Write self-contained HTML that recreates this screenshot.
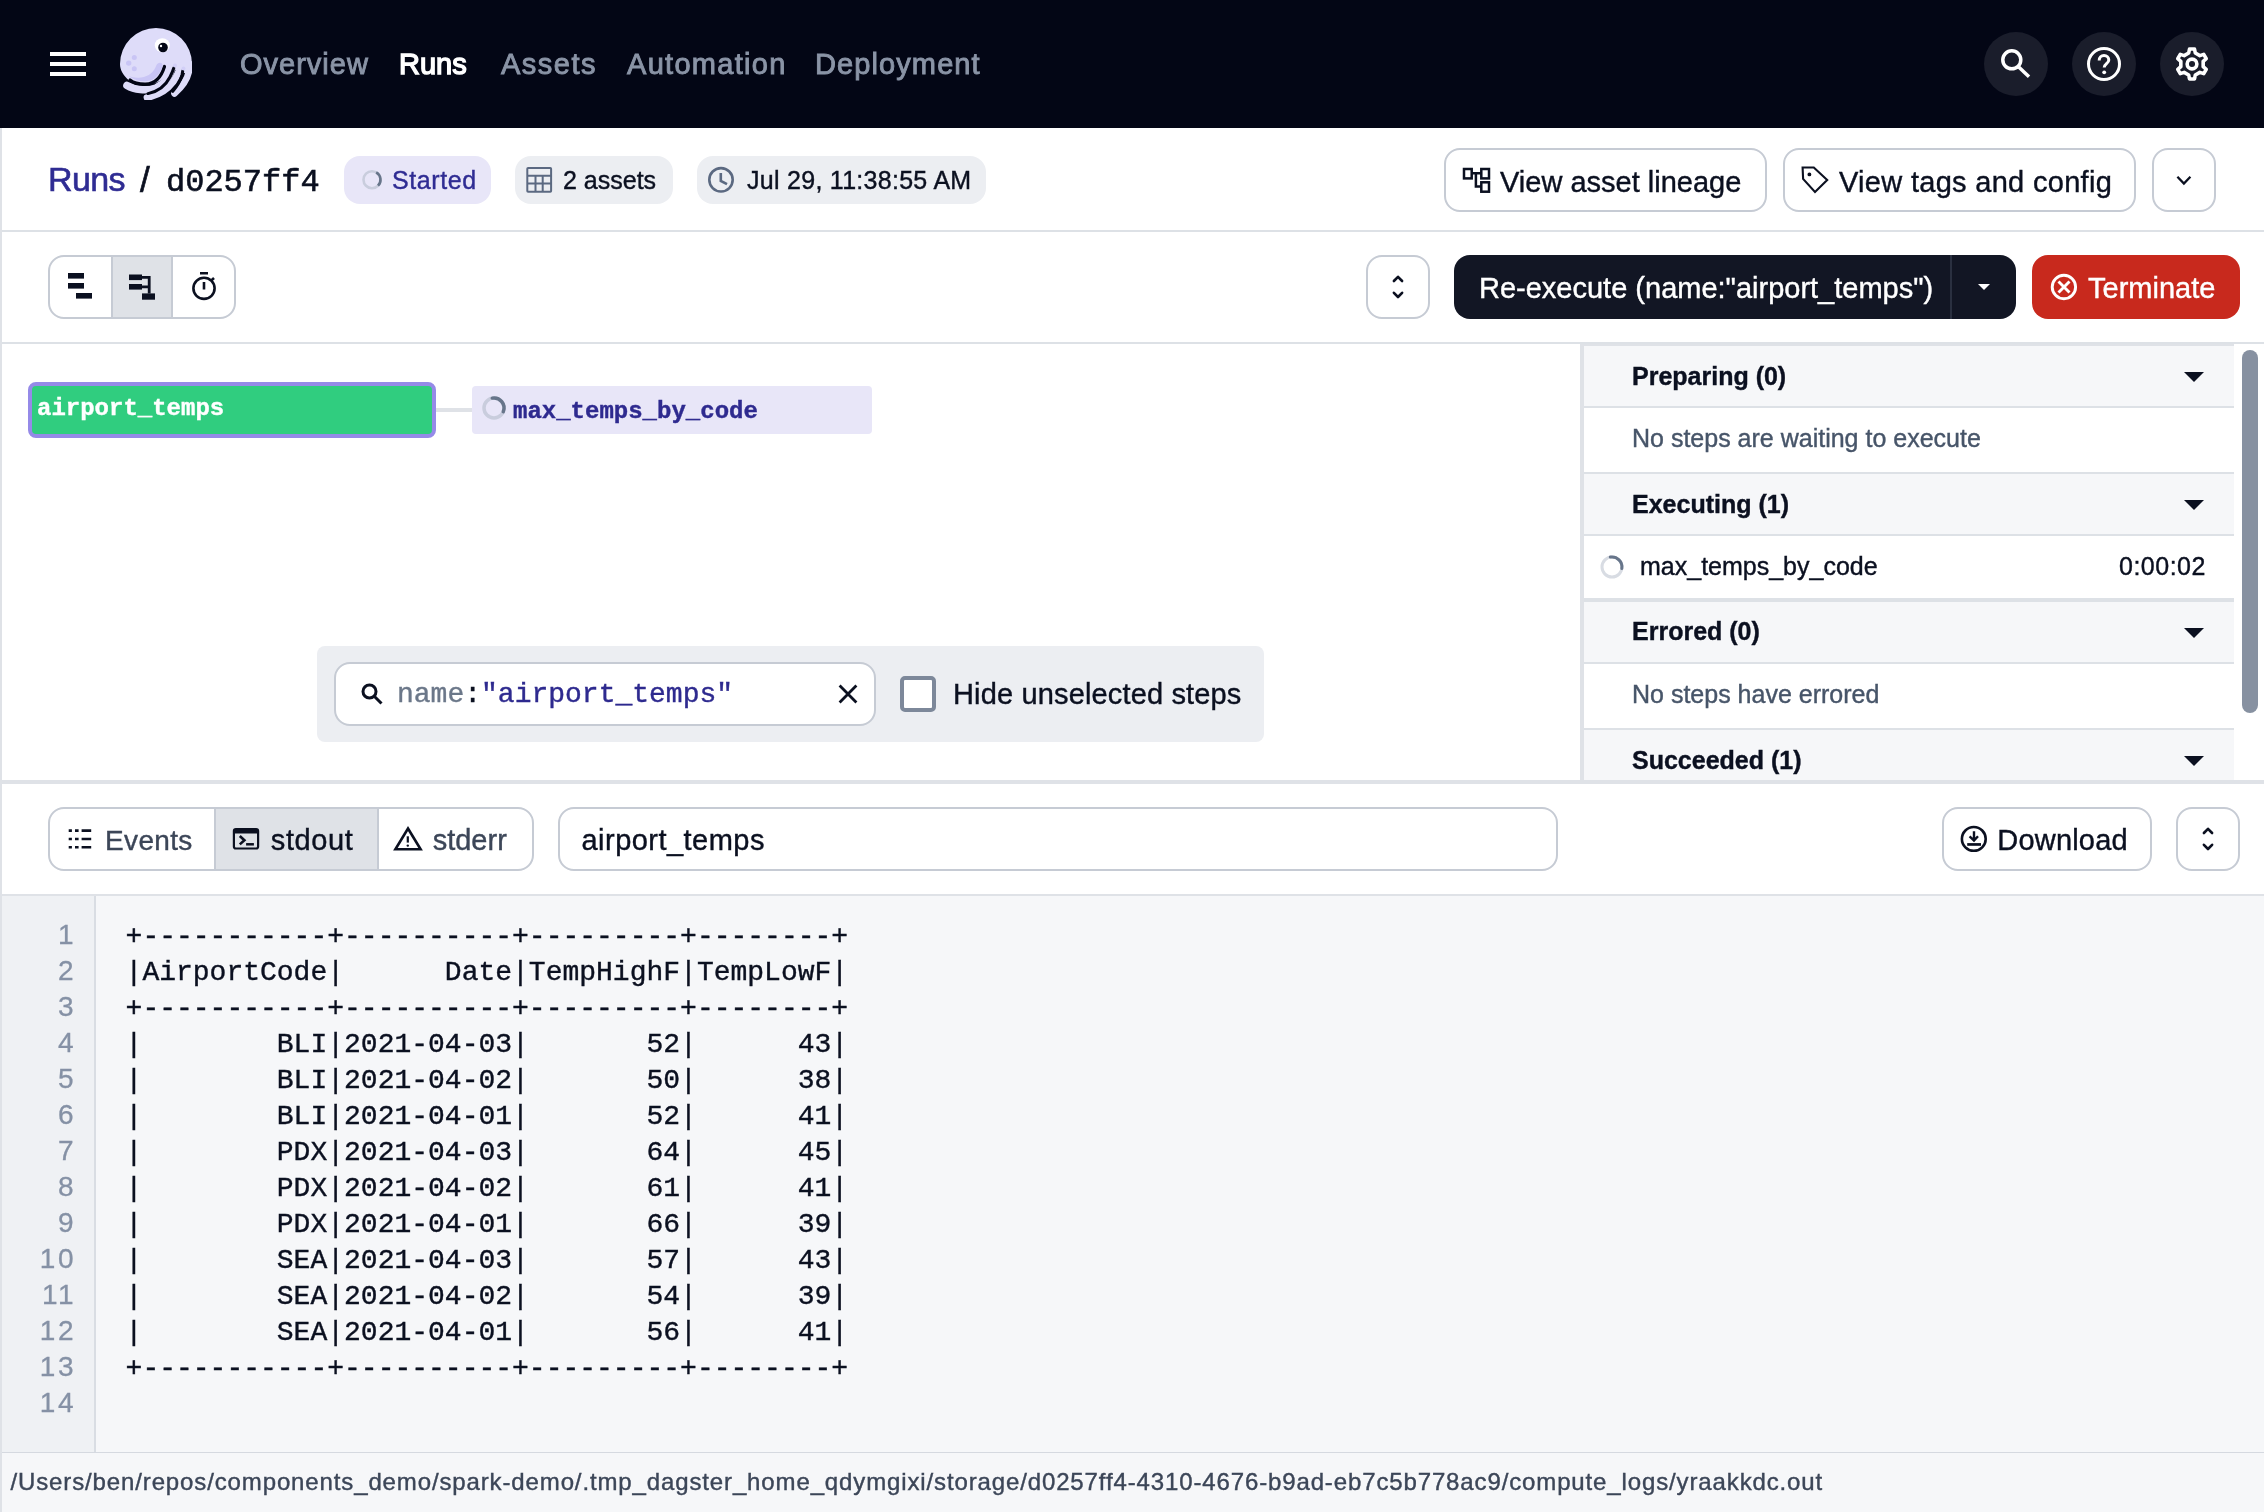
<!DOCTYPE html>
<html><head><meta charset="utf-8">
<style>
*{box-sizing:border-box;margin:0;padding:0}
html,body{will-change:transform;width:2264px;height:1512px;overflow:hidden;background:#fff;font-family:"Liberation Sans",sans-serif;color:#0b1020}
.a{position:absolute}
.t{position:absolute;white-space:pre;line-height:1;-webkit-text-stroke-width:0.4px}
.mono{font-family:"Liberation Mono",monospace}
/* header */
#nav{left:0;top:0;width:2264px;height:128px;background:#030615}
.navl{font-size:29px;color:#8a94a6;top:50px;letter-spacing:1px;-webkit-text-stroke:0.9px #8a94a6}
.circ{width:64px;height:64px;border-radius:50%;background:#1a1d2b;top:32px}
.btn{border:2px solid #c6cbd4;border-radius:16px;background:#fff}
.tag{border-radius:16px}
.hline{background:#dde1e6;height:2px}
</style></head><body>
<!-- left border -->
<div class="a" style="left:0;top:128px;width:2px;height:1384px;background:#dfe2e7"></div>

<!-- NAV -->
<div id="nav" class="a">
  <div class="a" style="left:50px;top:52px;width:36px;height:4px;background:#fff"></div>
  <div class="a" style="left:50px;top:62px;width:36px;height:4px;background:#fff"></div>
  <div class="a" style="left:50px;top:72px;width:36px;height:4px;background:#fff"></div>
  <svg class="a" style="left:120px;top:28px" width="72" height="72" viewBox="0 0 72 72">
<path d="M9 52.5 C3 47 0 42 0 36 A36 36 0 0 1 72 36 C72 40 71.5 44 70.5 47 L50 40 C47 49 40 56 26 56.5 C19 56.5 13 55 9 52.5 Z" fill="#dedcf9"/>
<path d="M7 57.5 C14 61.5 26 63.5 36 60 C45 56 50 48 52 38" stroke="#dedcf9" stroke-width="7.6" fill="none" stroke-linecap="round"/>
<path d="M27 69.5 C38 67.5 47 62 53 54 C57 48 59.5 43 60 38" stroke="#dedcf9" stroke-width="6.8" fill="none" stroke-linecap="round"/>
<path d="M54.5 65.5 C62 59 67.5 51 69 43 L69.5 36" stroke="#dedcf9" stroke-width="6.6" fill="none" stroke-linecap="round"/>
<path d="M10 52 C13.5 55 19 56.3 25.6 56.2 C34 55.8 41 50 44.5 38.5" stroke="#030615" stroke-width="3.2" fill="none" stroke-linecap="round"/>
<path d="M28 65.6 C38 63.5 46 57 50 49 C52 45 53.2 42 53.8 40" stroke="#030615" stroke-width="3" fill="none" stroke-linecap="round"/>
<path d="M52.8 63.3 C57 58.5 60.5 53 62 47 L62.7 43" stroke="#030615" stroke-width="3" fill="none" stroke-linecap="round"/>
<path d="M10 49 C15 52.5 20 53.5 26 53.3 C34 52.8 39.5 47 42.5 38.5 C43.5 35 39 33 36.5 37 C34 44 29 48.5 21 49.5 C16 50 12 49.5 9 48 Z" fill="#c9c5f5"/>
<circle cx="14.3" cy="29.5" r="2.5" fill="#c9c5f5"/>
<circle cx="8.7" cy="35.1" r="2.7" fill="#c9c5f5"/>
<circle cx="14.3" cy="40.8" r="2.5" fill="#c9c5f5"/>
<circle cx="55" cy="37.5" r="2" fill="#d2cff7"/>
<circle cx="63.5" cy="40.5" r="2" fill="#d2cff7"/>
<ellipse cx="42.3" cy="17.3" rx="7.5" ry="7" fill="#fff"/>
<circle cx="43" cy="19.5" r="4.8" fill="#030615"/>
<circle cx="41" cy="18" r="1.2" fill="#fff"/>
</svg>
  <div class="t navl" style="left:240px">Overview</div>
  <div class="t navl" style="left:399px;color:#fff;letter-spacing:0px;-webkit-text-stroke:1.4px #fff">Runs</div>
  <div class="t navl" style="left:501px;letter-spacing:1.5px">Assets</div>
  <div class="t navl" style="left:627px;letter-spacing:1.3px">Automation</div>
  <div class="t navl" style="left:815px;letter-spacing:1.1px">Deployment</div>
  <div class="a circ" style="left:1984px"></div>
  <div class="a circ" style="left:2072px"></div>
  <div class="a circ" style="left:2160px"></div>
  <svg class="a" style="left:1996px;top:44px" width="40" height="40" viewBox="0 0 40 40">
    <circle cx="15.8" cy="15.8" r="9" stroke="#fff" stroke-width="3.5" fill="none"/>
    <path d="M22.2 22.6 L33 32.8" stroke="#fff" stroke-width="3.5"/>
  </svg>
  <svg class="a" style="left:2084px;top:44px" width="40" height="40" viewBox="0 0 40 40">
    <circle cx="20" cy="20" r="15.5" stroke="#fff" stroke-width="3" fill="none"/>
    <path d="M15.2 16.5 C15.2 13.5 17.3 11.6 20 11.6 C22.8 11.6 24.8 13.5 24.8 16 C24.8 19.5 20.2 19.8 20.2 23.5" stroke="#fff" stroke-width="3" fill="none"/>
    <circle cx="20.2" cy="28.3" r="1.9" fill="#fff"/>
  </svg>
  <svg class="a" style="left:2168px;top:40px" width="48" height="48" viewBox="0 0 48 48" fill="none" stroke="#fff" stroke-width="3.6" stroke-linejoin="round">
    <path d="M20.70 13.00 L21.50 9.00 L26.50 9.00 L27.30 13.00 L31.88 15.64 L35.74 14.33 L38.24 18.67 L35.18 21.36 L35.18 26.64 L38.24 29.33 L35.74 33.67 L31.88 32.36 L27.30 35.00 L26.50 39.00 L21.50 39.00 L20.70 35.00 L16.12 32.36 L12.26 33.67 L9.76 29.33 L12.82 26.64 L12.82 21.36 L9.76 18.67 L12.26 14.33 L16.12 15.64 Z"/>
    <circle cx="24" cy="24" r="4.85"/>
  </svg>
</div>

<!-- SUBHEADER -->
<div class="t" style="left:48px;top:162px;font-size:34px;color:#2f2c93;letter-spacing:-0.6px;-webkit-text-stroke:0.6px #2f2c93">Runs</div>
<div class="t" style="left:140px;top:162px;font-size:35px;color:#0b1020;-webkit-text-stroke:0.7px #0b1020">/</div>
<div class="t mono" style="left:166px;top:166.5px;font-size:32px;color:#0b1020;-webkit-text-stroke:0.6px #0b1020">d0257ff4</div>

<div class="a tag" style="left:344px;top:156px;width:147px;height:48px;background:#e8e6f8"></div>
<div class="a tag" style="left:515px;top:156px;width:158px;height:48px;background:#eceef2"></div>
<div class="a tag" style="left:697px;top:156px;width:289px;height:48px;background:#eceef2"></div>
<div class="t" style="left:392px;top:168px;font-size:25px;color:#2f2c93;letter-spacing:0.6px">Started</div>
<div class="t" style="left:563px;top:168px;font-size:25px;color:#0b1020">2 assets</div>
<div class="t" style="left:747px;top:167.6px;font-size:25px;color:#0b1020;letter-spacing:0.28px">Jul 29, 11:38:55 AM</div>

<div class="a btn" style="left:1444px;top:148px;width:323px;height:64px"></div>
<div class="a btn" style="left:1783px;top:148px;width:353px;height:64px"></div>
<div class="a btn" style="left:2152px;top:148px;width:64px;height:64px"></div>
<div class="t" style="left:1500px;top:167.5px;font-size:29px">View asset lineage</div>
<div class="t" style="left:1839px;top:167.5px;font-size:29px;letter-spacing:0.3px">View tags and config</div>

<div class="a hline" style="left:2px;top:230px;width:2262px"></div>

<!-- TOOLBAR -->
<div class="a btn" style="left:48px;top:255px;width:188px;height:64px;overflow:hidden">
  <div class="a" style="left:61px;top:0;width:62px;height:60px;background:#dfe2e7;border-left:2px solid #c6cbd4;border-right:2px solid #c6cbd4"></div>
</div>
<div class="a btn" style="left:1366px;top:255px;width:64px;height:64px"></div>
<div class="a" style="left:1454px;top:255px;width:562px;height:64px;background:#121624;border-radius:16px"></div>
<div class="a" style="left:1950px;top:255px;width:2px;height:64px;background:#2a3040"></div>
<div class="t" style="left:1479px;top:274px;font-size:29px;color:#fff">Re-execute (name:"airport_temps")</div>
<div class="a" style="left:2032px;top:255px;width:208px;height:64px;background:#c8291d;border-radius:16px"></div>
<div class="t" style="left:2088px;top:273.8px;font-size:29px;color:#fff">Terminate</div>

<div class="a hline" style="left:2px;top:342px;width:2262px"></div>

<!-- subheader icons -->
<svg class="a" style="left:356px;top:164px" width="32" height="32" viewBox="0 0 32 32">
  <circle cx="16" cy="15.7" r="8.5" stroke="#c9cddd" stroke-width="2.6" fill="none"/>
  <path d="M20.2 8.3 A8.5 8.5 0 0 1 22 21.7" stroke="#67758a" stroke-width="2.6" fill="none"/>
</svg>
<svg class="a" style="left:520px;top:160px" width="40" height="40" viewBox="0 0 40 40" fill="none" stroke="#5b6981" stroke-width="2">
  <rect x="7.3" y="8" width="23.8" height="23.8" rx="0.8"/>
  <path d="M7.3 15.8 H31.1 M7.3 23.4 H31.1 M15.5 15.8 V31.8 M22.7 15.8 V31.8"/>
</svg>
<svg class="a" style="left:702px;top:162px" width="40" height="36" viewBox="0 0 40 36" fill="none" stroke="#5b6981" stroke-width="2.6">
  <circle cx="19" cy="17.8" r="11.7"/>
  <path d="M18.8 11 V19 L25 22.2"/>
</svg>
<svg class="a" style="left:1458px;top:162px" width="36" height="36" viewBox="0 0 36 36" fill="none" stroke="#0b1020" stroke-width="2.5">
  <rect x="6" y="7" width="7.7" height="9.4"/>
  <rect x="23.3" y="7" width="7.7" height="9.4"/>
  <rect x="23.3" y="20.3" width="7.7" height="9.4"/>
  <path d="M13.7 11.3 H23.3 M17.9 11.3 V24.5 H23.3"/>
</svg>
<svg class="a" style="left:1796px;top:158px" width="40" height="40" viewBox="0 0 40 40" fill="none" stroke="#0b1020" stroke-width="2.1" stroke-linejoin="miter">
  <path d="M6.6 9.5 H17.8 L31.2 22 L19 33.9 L7.1 20.9 Z"/>
  <circle cx="13.4" cy="16.4" r="0.9" fill="#0b1020"/>
</svg>
<svg class="a" style="left:2168px;top:166px" width="32" height="28" viewBox="0 0 32 28" fill="none" stroke="#0b1020" stroke-width="2.3">
  <path d="M9.4 10.7 L15.9 17.5 L22.4 10.7"/>
</svg>
<!-- toolbar icons -->
<svg class="a" style="left:48px;top:255px" width="188" height="64" viewBox="0 0 188 64" fill="#0b1020">
  <rect x="20" y="18" width="16" height="5.6"/>
  <rect x="20" y="28" width="16" height="5.6"/>
  <rect x="28" y="38" width="16" height="5.6"/>
  <rect x="81" y="19.5" width="13" height="5.6"/>
  <rect x="81" y="29" width="13" height="5.6"/>
  <rect x="94" y="38.4" width="13" height="6.3"/>
  <path d="M94 22.3 H101.2 V38.5 M94 31.9 H101.2" stroke="#0b1020" stroke-width="2.8" fill="none"/>
  <g fill="none" stroke="#0b1020" stroke-width="2.6">
    <circle cx="156" cy="33.3" r="10.6"/>
    <path d="M156 27 V34.5 M152 18.3 H160 M163.3 25.5 L166 23"/>
  </g>
</svg>
<svg class="a" style="left:1382px;top:267px" width="32" height="40" viewBox="0 0 32 40" fill="none" stroke="#0b1020" stroke-width="2.6" stroke-linecap="round" stroke-linejoin="round">
  <path d="M11.9 14 L16 9.8 L20.1 14 M11.9 25.8 L16 30 L20.1 25.8"/>
</svg>
<svg class="a" style="left:1970px;top:275px" width="28" height="24" viewBox="0 0 28 24">
  <path d="M8 9 H20 L14 15 Z" fill="#fff"/>
</svg>
<svg class="a" style="left:2040px;top:267px" width="50" height="40" viewBox="0 0 50 40" fill="none" stroke="#fff" stroke-width="2.9">
  <circle cx="23.9" cy="20" r="11.7"/>
  <path d="M18.5 14.5 L29.5 25.5 M29.5 14.5 L18.5 25.5"/>
</svg>



<!-- GRAPH -->
<div class="a" style="left:436px;top:408px;width:36px;height:4px;background:#dfe2e7"></div>
<div class="a" style="left:28px;top:382px;width:408px;height:56px;background:#30cd7f;border:4px solid #958ae8;border-radius:8px"></div>
<div class="t mono" style="left:37px;top:397px;font-size:24px;font-weight:bold;color:#fff">airport_temps</div>
<div class="a" style="left:472px;top:386px;width:400px;height:48px;background:#e8e6f8;border-radius:4px"></div>
<svg class="a" style="left:478px;top:392px" width="32" height="32" viewBox="0 0 32 32">
  <circle cx="16" cy="16" r="10" stroke="#c9cddd" stroke-width="3.5" fill="none"/>
  <path d="M14.3 6.1 A10 10 0 0 1 25.3 19.6" stroke="#67758a" stroke-width="3.5" fill="none" stroke-linecap="round"/>
</svg>
<div class="t mono" style="left:513px;top:400px;font-size:24px;font-weight:bold;color:#2e2a8f">max_temps_by_code</div>

<div class="a" style="left:317px;top:646px;width:947px;height:96px;background:#eceef2;border-radius:8px"></div>
<div class="a" style="left:334px;top:662px;width:542px;height:64px;background:#fff;border:2px solid #c6cbd4;border-radius:16px"></div>
<svg class="a" style="left:356px;top:678px" width="32" height="32" viewBox="0 0 32 32" fill="none" stroke="#0b1020" stroke-width="3">
  <circle cx="13.5" cy="13.5" r="6.5"/>
  <path d="M18.5 18.5 L25.5 25.5"/>
</svg>
<div class="t mono" style="left:397px;top:681px;font-size:28px"><span style="color:#6b7789">name</span>:<span style="color:#2e2a8f">"airport_temps"</span></div>
<svg class="a" style="left:832px;top:678px" width="32" height="32" viewBox="0 0 32 32" fill="none" stroke="#0b1020" stroke-width="2.8">
  <path d="M7.6 7.6 L24.4 24.4 M24.4 7.6 L7.6 24.4"/>
</svg>
<div class="a" style="left:900px;top:676px;width:36px;height:36px;border:4px solid #7d889a;border-radius:5px;background:#fff"></div>
<div class="t" style="left:953px;top:680px;font-size:29px;color:#0b1020;letter-spacing:0.15px">Hide unselected steps</div>

<!-- RIGHT PANEL -->
<div class="a" style="left:1580px;top:344px;width:654px;height:436px;background:#fff"></div>
<div class="a" style="left:1580px;top:344px;width:4px;height:436px;background:#dfe2e7"></div>
<div class="a" style="left:1584px;top:344px;width:650px;height:2px;background:#dfe2e7"></div>
<div class="a" style="left:1584px;top:346px;width:650px;height:62px;background:#f6f7f9;border-bottom:2px solid #dde1e6"></div>
<div class="a" style="left:1584px;top:472px;width:650px;height:2px;background:#dde1e6"></div>
<div class="a" style="left:1584px;top:474px;width:650px;height:62px;background:#f6f7f9;border-bottom:2px solid #dde1e6"></div>
<div class="a" style="left:1584px;top:598px;width:650px;height:4px;background:#dde1e6"></div>
<div class="a" style="left:1584px;top:602px;width:650px;height:62px;background:#f6f7f9;border-bottom:2px solid #dde1e6"></div>
<div class="a" style="left:1584px;top:728px;width:650px;height:2px;background:#dde1e6"></div>
<div class="a" style="left:1584px;top:730px;width:650px;height:50px;background:#f6f7f9"></div>
<div class="a" style="left:2242px;top:350px;width:16px;height:363px;background:#8791a1;border-radius:8px"></div>

<div class="t" style="left:1632px;top:363.8px;font-size:25px;font-weight:bold">Preparing (0)</div>
<div class="t" style="left:1632px;top:426.1px;font-size:25px;color:#475569">No steps are waiting to execute</div>
<div class="t" style="left:1632px;top:491.9px;font-size:25px;font-weight:bold">Executing (1)</div>
<svg class="a" style="left:1596px;top:551px" width="32" height="32" viewBox="0 0 32 32">
  <circle cx="16" cy="16" r="10" stroke="#d8dce3" stroke-width="3" fill="none"/>
  <path d="M14.3 6.1 A10 10 0 0 1 25.8 17.5" stroke="#67758a" stroke-width="3" fill="none" stroke-linecap="round"/>
</svg>
<div class="t" style="left:1640px;top:553.7px;font-size:25px">max_temps_by_code</div>
<div class="t" style="left:2119px;top:553.7px;font-size:25px;color:#0b1020;letter-spacing:0.5px">0:00:02</div>
<div class="t" style="left:1632px;top:618.8px;font-size:25px;font-weight:bold">Errored (0)</div>
<div class="t" style="left:1632px;top:682px;font-size:25px;color:#475569">No steps have errored</div>
<div class="t" style="left:1632px;top:747.8px;font-size:25px;font-weight:bold">Succeeded (1)</div>
<svg class="a" style="left:2180px;top:360px" width="28" height="420" viewBox="0 0 28 420" fill="#0b1020">
  <path d="M4 12 H24 L14 22 Z"/>
  <path d="M4 140 H24 L14 150 Z"/>
  <path d="M4 268 H24 L14 278 Z"/>
  <path d="M4 396 H24 L14 406 Z"/>
</svg>

<div class="a" style="left:2px;top:780px;width:2262px;height:4px;background:#dfe2e7"></div>

<!-- LOG TOOLBAR -->
<div class="a btn" style="left:48px;top:807px;width:486px;height:64px;overflow:hidden">
  <div class="a" style="left:164px;top:0;width:165px;height:60px;background:#dfe2e7;border-left:2px solid #c6cbd4;border-right:2px solid #c6cbd4"></div>
</div>
<div class="t" style="left:105px;top:826.8px;font-size:28px;color:#3c4658;letter-spacing:0.35px">Events</div>
<div class="t" style="left:270.8px;top:826px;font-size:29px;color:#0b1020;letter-spacing:0.6px">stdout</div>
<div class="t" style="left:432.7px;top:826px;font-size:29px;color:#3c4658">stderr</div>
<div class="a btn" style="left:558px;top:807px;width:1000px;height:64px"></div>
<div class="t" style="left:581.5px;top:825.8px;font-size:29px;color:#0b1020;letter-spacing:0.47px">airport_temps</div>
<div class="a btn" style="left:1942px;top:807px;width:210px;height:64px"></div>
<div class="t" style="left:1997.3px;top:825.8px;font-size:29px;color:#0b1020;letter-spacing:0.19px">Download</div>
<div class="a btn" style="left:2176px;top:807px;width:64px;height:64px"></div>
<div class="a" style="left:2px;top:894px;width:2262px;height:2px;background:#dfe2e7"></div>

<!-- CODE -->
<div class="a" style="left:2px;top:896px;width:2262px;height:556px;background:#f6f7f9"></div>
<div class="a" style="left:2px;top:896px;width:92px;height:556px;background:#eff1f4"></div>
<div class="a" style="left:94px;top:896px;width:2px;height:556px;background:#d9dde3"></div>
<div class="a" style="left:0;top:1452px;width:2264px;height:60px;background:#f6f7f9;border-top:1px solid #d5d9e0"></div>
<div class="a" style="left:0;top:896px;width:2px;height:616px;background:#dfe2e7"></div>
<div class="t" style="left:10.5px;top:1470.2px;font-size:24px;color:#3c4658;letter-spacing:0.87px">/Users/ben/repos/components_demo/spark-demo/.tmp_dagster_home_qdymgixi/storage/d0257ff4-4310-4676-b9ad-eb7c5b778ac9/compute_logs/yraakkdc.out</div>


<div class="a" style="left:0;top:917px;width:76px;font-size:28px;line-height:36px;text-align:right;color:#8591a5;white-space:pre;letter-spacing:2.5px;-webkit-text-stroke-width:0.3px">1
2
3
4
5
6
7
8
9
10
11
12
13
14</div>
<div class="a mono" style="left:125.6px;top:918.5px;font-size:28px;line-height:36px;color:#0b1020;white-space:pre;-webkit-text-stroke-width:0.4px">+-----------+----------+---------+--------+
|AirportCode|      Date|TempHighF|TempLowF|
+-----------+----------+---------+--------+
|        BLI|2021-04-03|       52|      43|
|        BLI|2021-04-02|       50|      38|
|        BLI|2021-04-01|       52|      41|
|        PDX|2021-04-03|       64|      45|
|        PDX|2021-04-02|       61|      41|
|        PDX|2021-04-01|       66|      39|
|        SEA|2021-04-03|       57|      43|
|        SEA|2021-04-02|       54|      39|
|        SEA|2021-04-01|       56|      41|
+-----------+----------+---------+--------+
</div>

<svg class="a" style="left:62px;top:822px" width="36" height="34" viewBox="0 0 36 34" fill="none" stroke="#0b1020" stroke-width="2.6">
  <path d="M6.7 8.65 H9.9 M13 8.65 H16.6 M19.6 8.65 H29.2 M6.7 17 H9.9 M13 17 H16.6 M19.6 17 H29.2 M6.7 25.3 H9.9 M13 25.3 H16.6 M19.6 25.3 H29.2"/>
</svg>
<svg class="a" style="left:226px;top:820px" width="40" height="38" viewBox="0 0 40 38" fill="none" stroke="#0b1020">
  <rect x="7.9" y="9.1" width="24.2" height="19.4" rx="2" stroke-width="2.2"/>
  <rect x="7.9" y="9.1" width="24.2" height="4.4" fill="#0b1020" stroke-width="0"/>
  <path d="M13.8 16 L18.4 20.3 L13.8 24.4" stroke-width="2.6"/>
  <path d="M20.1 24.3 H27.9" stroke-width="2.5"/>
</svg>
<svg class="a" style="left:388px;top:820px" width="40" height="38" viewBox="0 0 40 38" fill="none" stroke="#0b1020">
  <path d="M20 8.5 L32.6 29.2 H7.4 Z" stroke-width="2.6" stroke-linejoin="miter"/>
  <path d="M19.8 16.3 V22.6" stroke-width="2.2"/>
  <circle cx="19.8" cy="25.6" r="1.2" fill="#0b1020" stroke-width="0"/>
</svg>
<svg class="a" style="left:1954px;top:818px" width="40" height="40" viewBox="0 0 40 40" fill="none" stroke="#0b1020">
  <circle cx="19.8" cy="20.9" r="11.9" stroke-width="2.6"/>
  <path d="M20 13.2 V22.5 M15.6 18.3 L20 22.6 L24 18.3" stroke-width="2.4"/>
  <path d="M13.2 26.45 H27" stroke-width="2.7"/>
</svg>
<svg class="a" style="left:2192px;top:819px" width="32" height="40" viewBox="0 0 32 40" fill="none" stroke="#0b1020" stroke-width="2.6" stroke-linecap="round" stroke-linejoin="round">
  <path d="M11.9 14 L16 9.8 L20.1 14 M11.9 25.8 L16 30 L20.1 25.8"/>
</svg>

</body></html>
